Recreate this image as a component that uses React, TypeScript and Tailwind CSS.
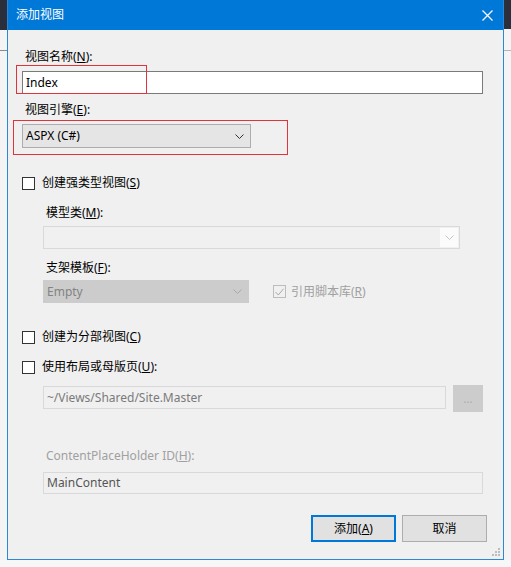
import React from "react"

const font = { fontFamily: '"Noto Sans", "Noto Sans CJK SC", sans-serif' }

function Chevron({ className = "" }: { className?: string }) {
  return (
    <svg width="9" height="5" viewBox="0 0 9 5" className={className}>
      <path d="M0.5 0.5 L4.5 4.5 L8.5 0.5" fill="none" stroke="currentColor" strokeWidth="1" />
    </svg>
  )
}

function Checkbox({ checked = false, disabled = false }: { checked?: boolean; disabled?: boolean }) {
  return (
    <div
      className={`w-[13px] h-[13px] flex items-center justify-center border ${
        disabled ? "border-[#bcbcbc] bg-[#f0f0f0]" : "border-[#333333] bg-white"
      }`}
    >
      {checked && (
        <svg width="9" height="8" viewBox="0 0 9 8">
          <path d="M0.5 4 L3.3 7 L8.5 0.8" fill="none" stroke={disabled ? "#a8a8a8" : "#000"} strokeWidth="1" />
        </svg>
      )}
    </div>
  )
}

export default function App() {
  return (
    <div className="w-[511px] h-[567px] flex flex-col bg-[#f6f6f6] overflow-hidden text-[12px] text-black" style={font}>
      <div className="flex h-[560px]">
        {/* left backdrop */}
        <div className="w-[7px] flex flex-col">
          <div className="h-[30px] bg-[#2a2f3b]" />
          <div className="h-[20px] bg-[#f4f4f4]" />
          <div className="h-[1px] bg-[#8a8a8a]" />
          <div className="flex-1 bg-[#f4f4f4]" />
        </div>

        {/* dialog */}
        <div className="relative w-[497px] flex flex-col border-x border-b border-[#2b88d8] bg-[#f0f0f0]">
          <div className="h-[30px] bg-[#0078d7] flex items-center justify-between pl-[8px] pr-[10px] text-white">
            <span className="leading-[16px]">添加视图</span>
            <svg width="11" height="11" viewBox="0 0 11 11">
              <path d="M0.5 0.5 L10.5 10.5 M10.5 0.5 L0.5 10.5" stroke="#ffffff" strokeWidth="1.2" />
            </svg>
          </div>

          <div className="flex-1 flex flex-col pt-[19px] pl-[14px] pr-[20px]">
            <div className="h-[16px] leading-[16px] pl-[3px]">
              视图名称(<u>N</u>):
            </div>
            <div className="mt-[6px] h-[23px] bg-white border border-[#7a7a7a] flex items-center pl-[3px]">Index</div>

            <div className="mt-[8px] h-[16px] leading-[16px] pl-[3px]">
              视图引擎(<u>E</u>):
            </div>
            <div className="mt-[6px] w-[229px] h-[24px] bg-[#e5e5e5] border border-[#adadad] flex items-center justify-between pl-[3px] pr-[6px]">
              <span>ASPX (C#)</span>
              <Chevron className="text-[#333]" />
            </div>

            <div className="mt-[27px] h-[16px] flex items-center gap-[7px]">
              <Checkbox />
              <span className="leading-[16px]">
                创建强类型视图(<u>S</u>)
              </span>
            </div>

            <div className="ml-[21px] flex flex-col">
              <div className="mt-[14px] h-[16px] leading-[16px] pl-[3px]">
                模型类(<u>M</u>):
              </div>
              <div className="mt-[5px] w-[417px] h-[23px] border border-[#d9d9d9] bg-[#f0f0f0] flex items-stretch p-[1px]">
                <div className="flex-1 bg-[#f0f0f0]" />
                <div className="w-[18px] bg-[#fbfbfb] flex items-center justify-center">
                  <Chevron className="text-[#c4c4c4]" />
                </div>
              </div>

              <div className="mt-[11px] h-[16px] leading-[16px] pl-[3px]">
                支架模板(<u>F</u>):
              </div>
              <div className="mt-[4px] flex items-center">
                <div className="w-[206px] h-[23px] bg-[#cccccc] border border-[#cccccc] flex items-center justify-between pl-[3px] pr-[6px] text-[#838383]">
                  <span>Empty</span>
                  <Chevron className="text-[#a9a9a9]" />
                </div>
                <div className="ml-[24px] flex items-center gap-[5px] text-[#a0a0a0]">
                  <Checkbox checked disabled />
                  <span className="leading-[16px]">
                    引用脚本库(<u>R</u>)
                  </span>
                </div>
              </div>
            </div>

            <div className="mt-[26px] h-[16px] flex items-center gap-[7px]">
              <Checkbox />
              <span className="leading-[16px]">
                创建为分部视图(<u>C</u>)
              </span>
            </div>

            <div className="mt-[14px] h-[16px] flex items-center gap-[7px]">
              <Checkbox />
              <span className="leading-[16px]">
                使用布局或母版页(<u>U</u>):
              </span>
            </div>

            <div className="ml-[21px] flex flex-col">
              <div className="mt-[10px] flex items-start">
                <div className="mt-[1px] w-[403px] h-[23px] border border-[#d9d9d9] bg-[#f0f0f0] flex items-center pl-[3px] text-[#7a7a7a]">
                  ~/Views/Shared/Site.Master
                </div>
                <div className="ml-[7px] w-[30px] h-[27px] bg-[#cccccc] border border-[#cccccc] flex items-end justify-center pb-[6px] text-[#b0b0b0] leading-none">
                  ...
                </div>
              </div>

              <div className="mt-[36px] h-[16px] leading-[16px] pl-[3px] text-[#a0a0a0]">
                ContentPlaceHolder ID(<u>H</u>):
              </div>
              <div className="mt-[8px] h-[22px] border border-[#d9d9d9] bg-[#f0f0f0] flex items-center pl-[3px] text-[#555555]">
                MainContent
              </div>
            </div>

            <div className="mt-[21px] flex justify-end gap-[6px] pr-[-4px] mr-[-4px]">
              <div className="w-[85px] h-[27px] border-2 border-[#0078d7] bg-[#e1e1e1] flex items-center justify-center">
                <span>
                  添加(<u>A</u>)
                </span>
              </div>
              <div className="w-[85px] h-[27px] border border-[#adadad] bg-[#e1e1e1] flex items-center justify-center">
                取消
              </div>
            </div>
          </div>

          {/* resize grip */}
          <svg className="absolute right-[2px] bottom-[2px]" width="10" height="10" viewBox="0 0 10 10">
            <rect x="7" y="1" width="2" height="2" fill="#bdbdbd" />
            <rect x="4" y="4" width="2" height="2" fill="#bdbdbd" />
            <rect x="7" y="4" width="2" height="2" fill="#bdbdbd" />
            <rect x="1" y="7" width="2" height="2" fill="#bdbdbd" />
            <rect x="4" y="7" width="2" height="2" fill="#bdbdbd" />
            <rect x="7" y="7" width="2" height="2" fill="#bdbdbd" />
          </svg>
        </div>

        {/* right backdrop */}
        <div className="flex-1 flex flex-col">
          <div className="h-[29px] bg-[#2a2f3b]" />
          <div className="h-[21px] bg-[#f4f4f4]" />
          <div className="h-[1px] bg-[#b5b5b5]" />
          <div className="flex-1 bg-[#f4f4f4]" />
        </div>
      </div>
      <div className="flex-1 bg-[#f7f7f7]" />

      {/* red annotation boxes */}
      <div className="absolute left-[16px] top-[65px] w-[131px] h-[29px] border border-[#e0333c]" />
      <div className="absolute left-[13px] top-[120px] w-[275px] h-[35px] border border-[#e0333c]" />
    </div>
  )
}
